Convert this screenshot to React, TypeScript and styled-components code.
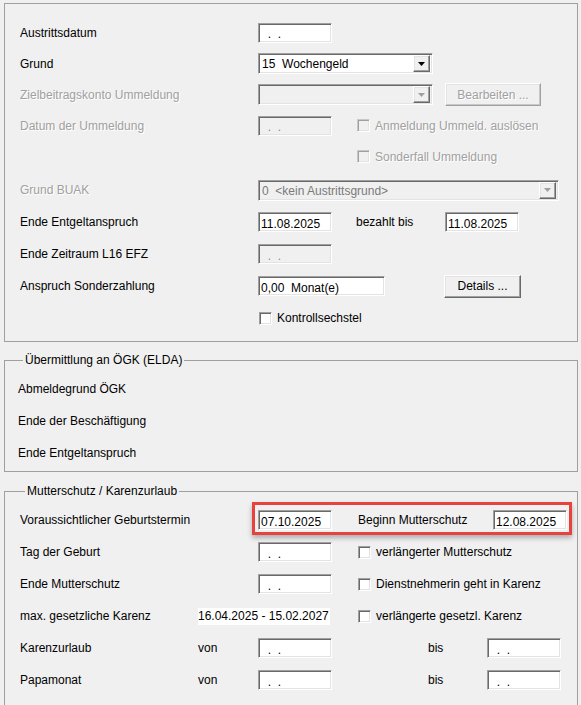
import React from "react";
import styled, { createGlobalStyle, css } from "styled-components";

const GlobalStyle = createGlobalStyle`
  html, body {
    margin: 0;
    padding: 0;
    background: #f0f0f0;
  }
  body {
    font-family: "Liberation Sans", Arial, sans-serif;
    font-size: 12px;
    color: #000;
  }
`;

const Page = styled.div`
  width: 581px;
  height: 705px;
  overflow: hidden;
  box-sizing: border-box;
  padding: 3px 3px 0 4px;
  background: #f0f0f0;
`;

const sunken = css`
  box-sizing: border-box;
  border: 1px solid;
  border-color: #a0a0a0 #fff #fff #a0a0a0;
  box-shadow: inset 1px 1px 0 #696969, inset -1px -1px 0 #e3e3e3;
`;

const raised = css`
  box-sizing: border-box;
  border: 1px solid;
  border-color: #fff #696969 #696969 #fff;
  box-shadow: inset -1px -1px 0 #a0a0a0, inset 1px 1px 0 #e3e3e3;
`;

const Panel = styled.div`
  border: 1px solid #a0a0a0;
  padding: 13px 0 7px 15px;
`;

const Group = styled.fieldset<{ $pl: number; $pb: number; $mt: number }>`
  margin: ${(p) => p.$mt}px 0 0;
  padding: 6px 0 ${(p) => p.$pb}px ${(p) => p.$pl}px;
  border: 1px solid #a0a0a0;
  min-width: 0;
`;

const Legend = styled.legend`
  margin-left: 5px;
  padding: 0 2px;
  line-height: 14px;
  font-size: 12px;
`;

const Row = styled.div<{ $h?: number; $mt?: number }>`
  position: relative;
  display: flex;
  align-items: center;
  height: ${(p) => p.$h ?? 32}px;
  margin-top: ${(p) => p.$mt ?? 0}px;
`;

const Slot = styled.div<{ $w: number; $pl?: number }>`
  flex: none;
  width: ${(p) => p.$w}px;
  box-sizing: border-box;
  padding-left: ${(p) => p.$pl ?? 0}px;
  display: flex;
  align-items: center;
  white-space: nowrap;
`;

const Label = styled.span<{ $off?: boolean }>`
  white-space: pre;
  color: ${(p) => (p.$off ? "#a0a0a0" : "#000")};
  text-shadow: ${(p) => (p.$off ? "1px 1px 0 #fff" : "none")};
`;

const Field = styled.input<{ $w: number }>`
  ${sunken};
  width: ${(p) => p.$w}px;
  height: 20px;
  margin: 0;
  padding: 3px 0 0 2px;
  font-family: "Liberation Sans", Arial, sans-serif;
  font-size: 12px;
  color: #000;
  background: #fff;
  white-space: pre;
  outline: none;
  &:disabled {
    background: #f0f0f0;
    color: #8a8a8a;
  }
`;

const Select = styled.div<{ $w: number; $off?: boolean }>`
  ${sunken};
  width: ${(p) => p.$w}px;
  height: 21px;
  display: flex;
  align-items: center;
  padding: 0 2px 0 3px;
  background: ${(p) => (p.$off ? "#f0f0f0" : "#fff")};
  color: ${(p) => (p.$off ? "#7a7a7a" : "#000")};
`;

const SelectText = styled.span`
  flex: 1;
  white-space: pre;
  padding-top: 1px;
`;

const ArrowBtn = styled.span`
  ${raised};
  width: 17px;
  height: 17px;
  display: flex;
  align-items: center;
  justify-content: center;
  background: #f0f0f0;
`;

const Button = styled.button<{ $w: number }>`
  ${raised};
  width: ${(p) => p.$w}px;
  height: 23px;
  padding: 0;
  margin: 0;
  background: #f0f0f0;
  font-family: "Liberation Sans", Arial, sans-serif;
  font-size: 12px;
  color: #000;
  &:disabled {
    color: #a0a0a0;
    text-shadow: 1px 1px 0 #fff;
    border-color: #fff #a0a0a0 #a0a0a0 #fff;
    box-shadow: inset -1px -1px 0 #c8c8c8, inset 1px 1px 0 #e3e3e3;
  }
`;

const CheckWrap = styled.label`
  display: flex;
  align-items: center;
  white-space: nowrap;
`;

const CheckBox = styled.span<{ $off?: boolean }>`
  ${sunken};
  flex: none;
  width: 13px;
  height: 13px;
  margin-right: 5px;
  background: ${(p) => (p.$off ? "#f0f0f0" : "#fff")};
  ${(p) =>
    p.$off &&
    css`
      border-color: #c8c8c8 #fff #fff #c8c8c8;
      box-shadow: inset 1px 1px 0 #a0a0a0, inset -1px -1px 0 #e3e3e3;
    `}
`;

const RangeText = styled.span`
  background: #fff;
  padding: 1px 1px 2px 0;
  line-height: 14px;
`;

const Highlight = styled.div`
  position: absolute;
  left: 232px;
  top: -2px;
  width: 320px;
  height: 33px;
  box-sizing: border-box;
  border: 3px solid #e8423f;
  box-shadow: 0 3px 5px rgba(0, 0, 0, 0.28);
  pointer-events: none;
`;

const Arrow = ({ off }: { off?: boolean }) => (
  <svg width="7" height="4" viewBox="0 0 7 4">
    <polygon points="0,0 7,0 3.5,4" fill={off ? "#a0a0a0" : "#000"} />
  </svg>
);

const Combo = ({ w, text, off }: { w: number; text: string; off?: boolean }) => (
  <Select $w={w} $off={off}>
    <SelectText>{text}</SelectText>
    <ArrowBtn>
      <Arrow off={off} />
    </ArrowBtn>
  </Select>
);

const Check = ({ text, off }: { text: string; off?: boolean }) => (
  <CheckWrap>
    <CheckBox $off={off} />
    <Label $off={off}>{text}</Label>
  </CheckWrap>
);

const Date = ({ v = "  .  .", off }: { v?: string; off?: boolean }) => (
  <Field $w={74} readOnly value={v} disabled={off} />
);

const App = () => {
  return (
    <Page>
      <GlobalStyle />
      <Panel>
        <Row $h={31}>
          <Slot $w={238}><Label>Austrittsdatum</Label></Slot>
          <Date />
        </Row>
        <Row $h={31}>
          <Slot $w={238}><Label>Grund</Label></Slot>
          <Combo w={175} text="15  Wochengeld" />
        </Row>
        <Row $h={31}>
          <Slot $w={238}><Label $off>Zielbeitragskonto Ummeldung</Label></Slot>
          <Slot $w={187}><Combo w={175} text="" off /></Slot>
          <Button $w={96} disabled>Bearbeiten ...</Button>
        </Row>
        <Row $h={31}>
          <Slot $w={238}><Label $off>Datum der Ummeldung</Label></Slot>
          <Slot $w={99}><Date off /></Slot>
          <Check text="Anmeldung Ummeld. auslösen" off />
        </Row>
        <Row $h={31}>
          <Slot $w={337} />
          <Check text="Sonderfall Ummeldung" off />
        </Row>
        <Row $mt={2}>
          <Slot $w={238}><Label $off>Grund BUAK</Label></Slot>
          <Combo w={301} text="0  <kein Austrittsgrund>" off />
        </Row>
        <Row>
          <Slot $w={238}><Label>Ende Entgeltanspruch</Label></Slot>
          <Slot $w={98}><Date v="11.08.2025" /></Slot>
          <Slot $w={89}><Label>bezahlt bis</Label></Slot>
          <Date v="11.08.2025" />
        </Row>
        <Row>
          <Slot $w={238}><Label>Ende Zeitraum L16 EFZ</Label></Slot>
          <Date off />
        </Row>
        <Row>
          <Slot $w={238}><Label>Anspruch Sonderzahlung</Label></Slot>
          <Slot $w={186}><Field $w={127} readOnly value="0,00  Monat(e)" /></Slot>
          <Button $w={77}>Details ...</Button>
        </Row>
        <Row>
          <Slot $w={239} />
          <Check text="Kontrollsechstel" />
        </Row>
      </Panel>

      <Group $pl={13} $pb={2} $mt={11}>
        <Legend>Übermittlung an ÖGK (ELDA)</Legend>
        <Row><Label>Abmeldegrund ÖGK</Label></Row>
        <Row><Label>Ende der Beschäftigung</Label></Row>
        <Row><Label>Ende Entgeltanspruch</Label></Row>
      </Group>

      <Group $pl={15} $pb={20} $mt={12}>
        <Legend>Mutterschutz / Karenzurlaub</Legend>
        <Row>
          <Slot $w={238}><Label>Voraussichtlicher Geburtstermin</Label></Slot>
          <Slot $w={98}><Date v="07.10.2025" /></Slot>
          <Slot $w={137} $pl={2}><Label>Beginn Mutterschutz</Label></Slot>
          <Date v="12.08.2025" />
          <Highlight />
        </Row>
        <Row>
          <Slot $w={238}><Label>Tag der Geburt</Label></Slot>
          <Slot $w={100}><Date /></Slot>
          <Check text="verlängerter Mutterschutz" />
        </Row>
        <Row>
          <Slot $w={238}><Label>Ende Mutterschutz</Label></Slot>
          <Slot $w={100}><Date /></Slot>
          <Check text="Dienstnehmerin geht in Karenz" />
        </Row>
        <Row>
          <Slot $w={178}><Label>max. gesetzliche Karenz</Label></Slot>
          <Slot $w={160}><RangeText>16.04.2025 - 15.02.2027</RangeText></Slot>
          <Check text="verlängerte gesetzl. Karenz" />
        </Row>
        <Row>
          <Slot $w={178}><Label>Karenzurlaub</Label></Slot>
          <Slot $w={60}><Label>von</Label></Slot>
          <Slot $w={170}><Date /></Slot>
          <Slot $w={59}><Label>bis</Label></Slot>
          <Date />
        </Row>
        <Row>
          <Slot $w={178}><Label>Papamonat</Label></Slot>
          <Slot $w={60}><Label>von</Label></Slot>
          <Slot $w={170}><Date /></Slot>
          <Slot $w={59}><Label>bis</Label></Slot>
          <Date />
        </Row>
      </Group>
    </Page>
  );
};

export default App;
